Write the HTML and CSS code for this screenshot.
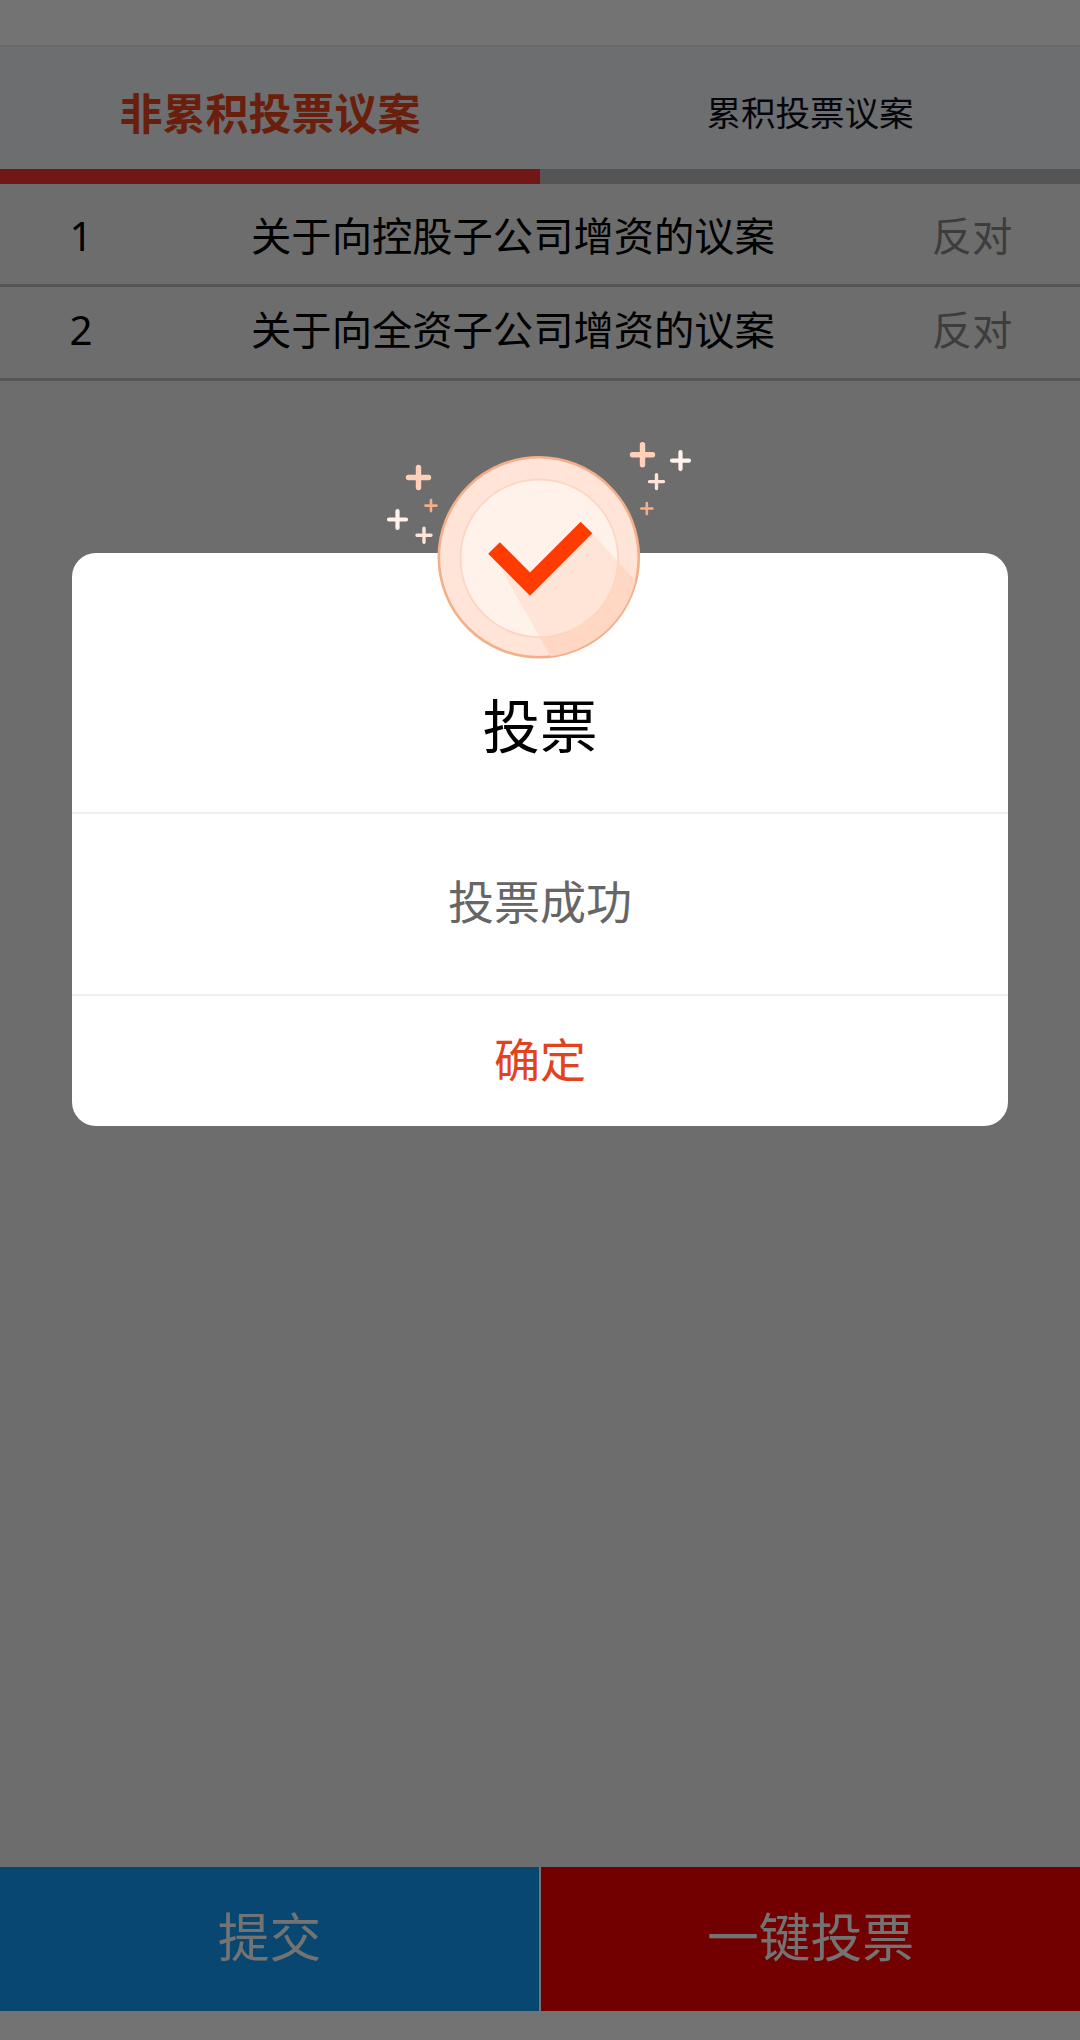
FILE: index.html
```html
<!DOCTYPE html>
<html lang="zh-CN">
<head>
<meta charset="utf-8">
<title>投票</title>
<link rel="stylesheet" href="styles.css">
</head>
<body>
<div class="page">
  <header class="topbar"></header>
  <nav class="tabs">
    <a class="tab tab-active"><span>非累积投票议案</span></a>
    <a class="tab"><span>累积投票议案</span></a>
  </nav>
  <main class="list">
    <div class="row"><span class="num">1</span><span class="name">关于向控股子公司增资的议案</span><span class="vote">反对</span></div>
    <div class="row"><span class="num">2</span><span class="name">关于向全资子公司增资的议案</span><span class="vote">反对</span></div>
  </main>
  <footer class="actions">
    <button class="btn btn-submit">提交</button>
    <button class="btn btn-quick">一键投票</button>
  </footer>
</div>
<div class="overlay">
  <section class="dialog">
    <svg class="badge" viewBox="0 0 340 260" width="340" height="260">
      <defs>
        <clipPath id="disc"><circle cx="168.8" cy="137.3" r="99.5"/></clipPath>
        <clipPath id="core"><circle cx="169.3" cy="138.3" r="78.5"/></clipPath>
      </defs>
      <circle cx="168.8" cy="137.3" r="100" fill="#ffe4d7" stroke="#f4ae88" stroke-width="2.6"/>
      <path clip-path="url(#disc)" d="M222 113 L290 188 V260 H194 L130 147 L160 175Z" fill="#ffd7c3"/>
      <circle cx="169.3" cy="138.3" r="78.5" fill="#fff2eb"/>
      <path clip-path="url(#core)" d="M222 113 L290 188 V260 H194 L130 147 L160 175Z" fill="#ffe5d8"/>
      <circle cx="169.3" cy="138.3" r="78.8" fill="none" stroke="#fdd6c2" stroke-width="1.8"/>
      <path d="M124 128 L160 164 L216.500 107.500" fill="none" stroke="#ff3c00" stroke-width="16.500"/>
      <g fill="none" stroke-linecap="round">
        <path d="M38.500 57.500h20M48.500 47.500v20M262.500 34.800h20M272.500 24.800v20" stroke="#ffd0b9" stroke-width="5.4"/>
        <path d="M19 99.500h17M27.500 91v17M302 40.600h17M310.500 32.100v17" stroke="#fff3ee" stroke-width="4.2"/>
        <path d="M47 115.300h14M54 108.300v14M279.500 61.600h14M286.500 54.600v14" stroke="#ffe4d7" stroke-width="3.400"/>
        <path d="M55.500 85.600h11M61 80.100v11M271.300 88.500h11M276.800 83v11" stroke="#f4ae88" stroke-width="2.600"/>
      </g>
    </svg>
    <h1 class="title">投票</h1>
    <p class="message">投票成功</p>
    <button class="confirm">确定</button>
  </section>
</div>
</body>
</html>
```
FILE: styles.css
```css
* { box-sizing: border-box; margin: 0; padding: 0; }
body {
  font-family: "Noto Sans CJK SC", sans-serif;
  background: #fff;
  color: #000;
  line-height: 1;
}
button { border: 0; font: inherit; background: none; }
.page { display: flex; flex-direction: column; height: 2040px; padding-bottom: 29px; }
.topbar { height: 47px; border-bottom: 2px solid #e8e8e8; }
.tabs { display: grid; grid-template-columns: 1fr 1fr; height: 137px; background: #f2f3f8; }
.tab {
  display: flex; align-items: center; justify-content: center;
  padding-top: 7px;
  border-bottom: 15px solid #bdbdbd;
  font-size: 34.500px; color: #0c0f1c;
}
.tab-active { border-color: #fb3331; font-size: 43px; font-weight: 700; color: #e8451c; }
.list { flex: 1; padding-top: 9px; background: #f2f2f2; }
.row {
  display: grid; grid-template-columns: 162px 702px 216px; align-items: center;
  height: 94px; padding-bottom: 9px; border-bottom: 3px solid #bfbfbf;
  font-size: 40.300px; text-align: center;
}
.num { padding-top: 5px; font-family: "Noto Sans", sans-serif; }
.vote { color: #888; }
.actions { display: grid; grid-template-columns: 1fr 1fr; gap: 2px; height: 144px; background: #fff; }
.btn { padding-bottom: 9px; font-size: 51.800px; line-height: 1; color: #fff; }
.btn-submit { background: #109efb; }
.btn-quick { background: #fd0000; }
.overlay { position: fixed; inset: 0; padding: 553px 72px 0; background: rgba(0, 0, 0, 0.55); }
.dialog {
  position: relative;
  display: grid; grid-template-rows: 261px 182px 130px;
  border-radius: 24px; background: #fff;
}
.badge { position: absolute; left: 298px; top: -133px; }
.title, .message, .confirm { display: flex; justify-content: center; font-weight: 400; }
.title { padding-top: 142px; font-size: 57.500px; border-bottom: 2px solid #efefef; }
.message { align-items: center; padding-bottom: 10px; font-size: 46px; color: #666; border-bottom: 2px solid #efefef; }
.confirm { align-items: center; padding-bottom: 9px; font-size: 46px; color: #e2431d; }
```
